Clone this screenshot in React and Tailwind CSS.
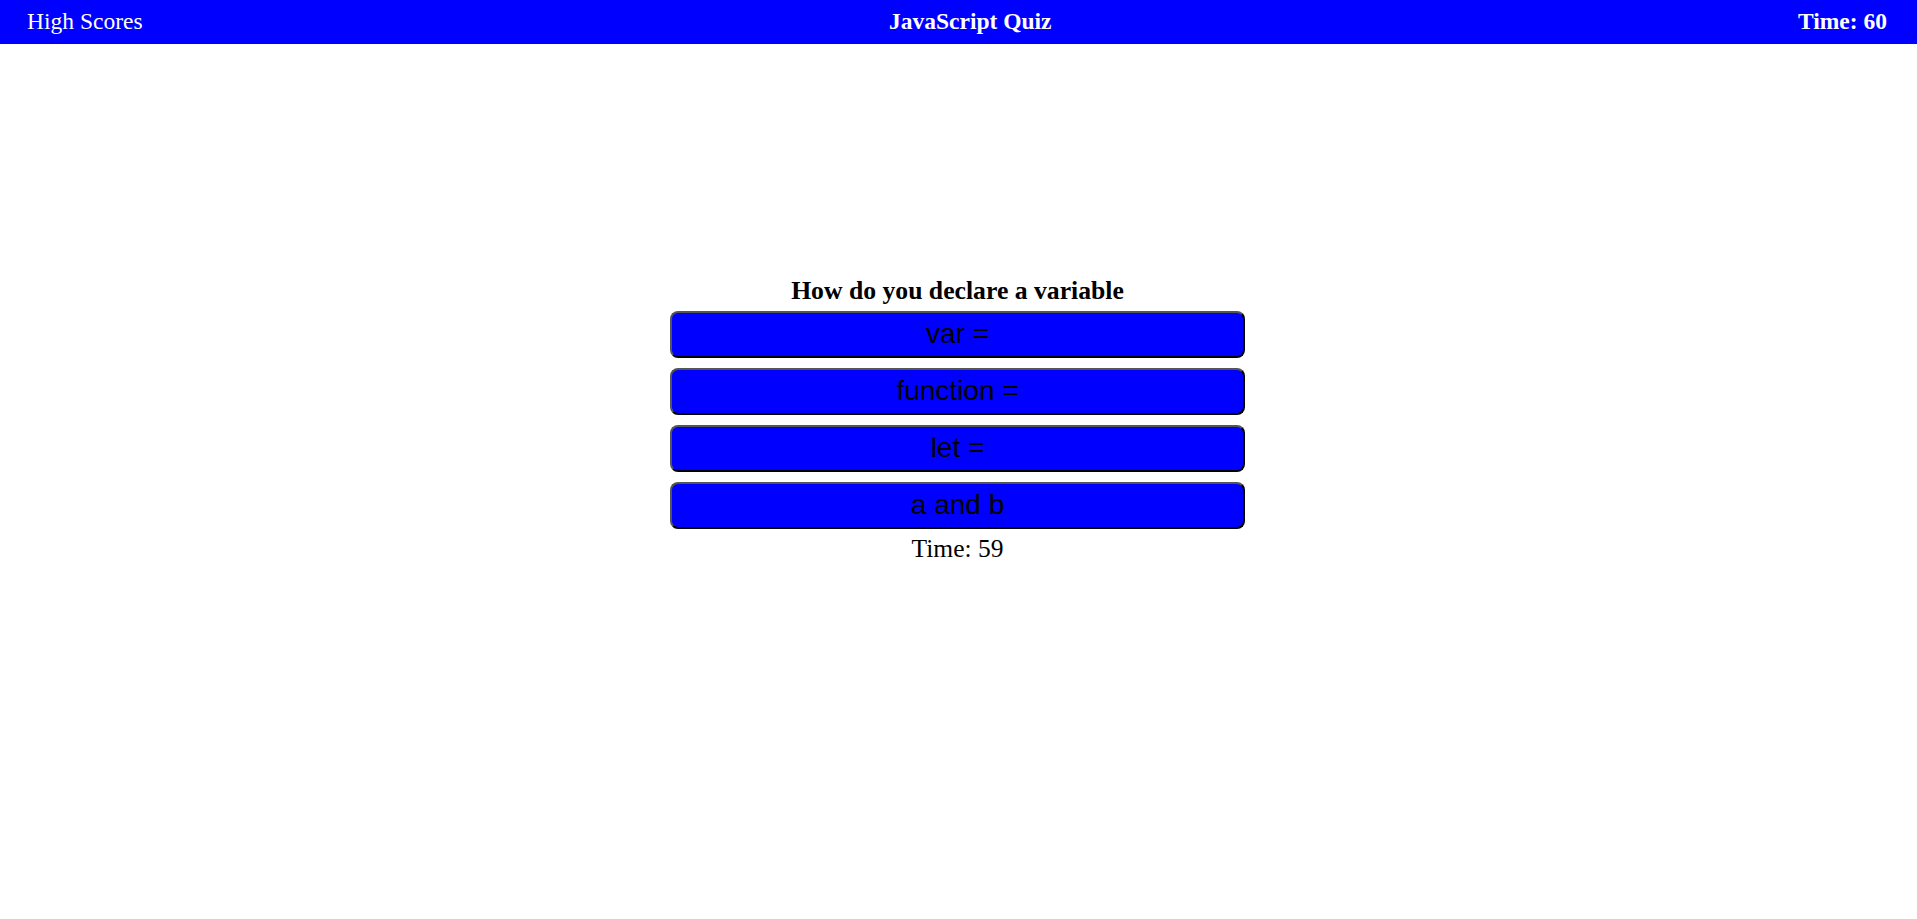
import React from 'react';

const answers = ['var =', 'function =', 'let =', 'a and b'];

function App() {
  return (
    <div className="min-h-screen bg-white font-['Liberation_Serif',serif]">
      {/* Top bar */}
      <header className="flex h-[44px] items-center justify-between bg-[#0000ff] pl-[27px] pr-[30px] text-[23.5px] text-white">
        <span>High Scores</span>
        <span className="font-bold">JavaScript Quiz</span>
        <span className="font-bold">Time: 60</span>
      </header>

      {/* Quiz */}
      <main className="mx-auto mt-[228px] flex w-[575px] -translate-x-[1px] flex-col items-center">
        <h2 className="text-[25.7px] font-bold text-black">How do you declare a variable</h2>
        <div className="flex w-full flex-col gap-[10px]">
          {answers.map((a) => (
            <button
              key={a}
              className="flex h-[47px] w-full items-center justify-center rounded-lg border-2 border-black border-t-[#555] border-l-[#555] bg-[#0000ff] font-['Liberation_Sans',Arial,sans-serif] text-[28px] text-black"
            >
              {a}
            </button>
          ))}
        </div>
        <p className="mt-[1px] text-[25.5px] text-black">Time: 59</p>
      </main>
    </div>
  );
}

export default App;
